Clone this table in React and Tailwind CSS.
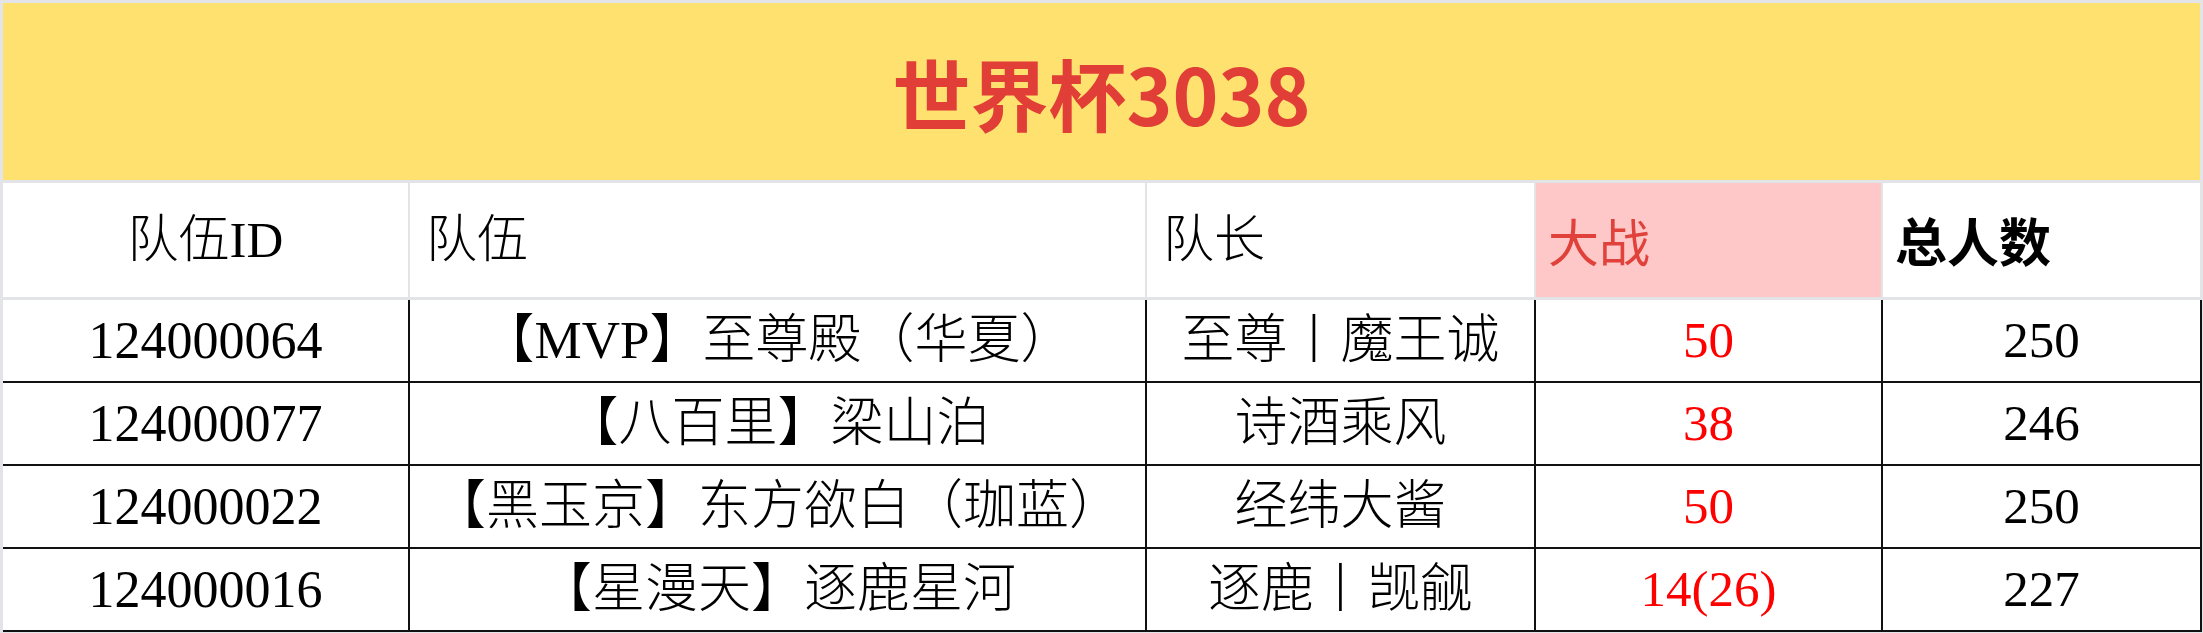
const teams = [
  { id: '124000064', name: '【MVP】至尊殿（华夏）', captain: '至尊丨魔王诚', battle: '50', total: '250' },
  { id: '124000077', name: '【八百里】梁山泊', captain: '诗酒乘风', battle: '38', total: '246' },
  { id: '124000022', name: '【黑玉京】东方欲白（珈蓝）', captain: '经纬大酱', battle: '50', total: '250' },
  { id: '124000016', name: '【星漫天】逐鹿星河', captain: '逐鹿丨觊觎', battle: '14(26)', total: '227' },
]

const serif = "font-['Liberation_Serif','Noto_Sans_CJK_SC',serif]"
const sans = "font-['Noto_Sans_CJK_SC','Noto_Sans',sans-serif]"
const cols = 'grid grid-cols-[405px_735px_387px_345px_317px]'

export default function App() {
  return (
    <div className="w-[2203px] h-[633px] bg-[#e3e4e8] pt-[3px] overflow-hidden">
      <div className="mx-[3px] h-[177px] bg-[#ffe16f] flex items-center justify-center">
        <h1 className={`${sans} text-[78px] font-bold leading-none text-[#e03e36]`}>世界杯3038</h1>
      </div>

      <div className={`${cols} gap-x-[2px] mt-[3px] ml-[3px] h-[114px]`}>
        <div className={`bg-white flex items-center justify-center ${serif} text-[51px] font-light text-black`}>队伍ID</div>
        <div className={`bg-white flex items-center pl-[16px] ${serif} text-[51px] font-light text-black`}>队伍</div>
        <div className={`bg-white flex items-center pl-[16px] ${serif} text-[51px] font-light text-black`}>队长</div>
        <div className={`bg-[#ffc8c8] flex items-center pl-[12px] ${sans} text-[51px] text-[#e0413a]`}>大战</div>
        <div className={`bg-white flex items-center pl-[12px] ${sans} text-[52px] font-bold text-black`}>总人数</div>
      </div>

      <div className="mt-[3px] ml-[3px] mr-px bg-[#111111] pr-[2px] pb-[2px]">
        <div className={`${cols} gap-[2px]`}>
          {teams.map((t) => (
            <div key={t.id} className="contents">
              <div className={`bg-white h-[81px] flex items-center justify-center ${serif} text-[52px] text-black`}>{t.id}</div>
              <div className={`bg-white h-[81px] flex items-center justify-center ${serif} text-[53px] font-light text-black`}>{t.name}</div>
              <div className={`bg-white h-[81px] flex items-center justify-center ${serif} text-[53px] font-light text-black`}>{t.captain}</div>
              <div className={`bg-white h-[81px] flex items-center justify-center ${serif} text-[51px] text-[#ff0000]`}>{t.battle}</div>
              <div className={`bg-white h-[81px] flex items-center justify-center ${serif} text-[51px] text-black`}>{t.total}</div>
            </div>
          ))}
        </div>
      </div>
    </div>
  )
}
